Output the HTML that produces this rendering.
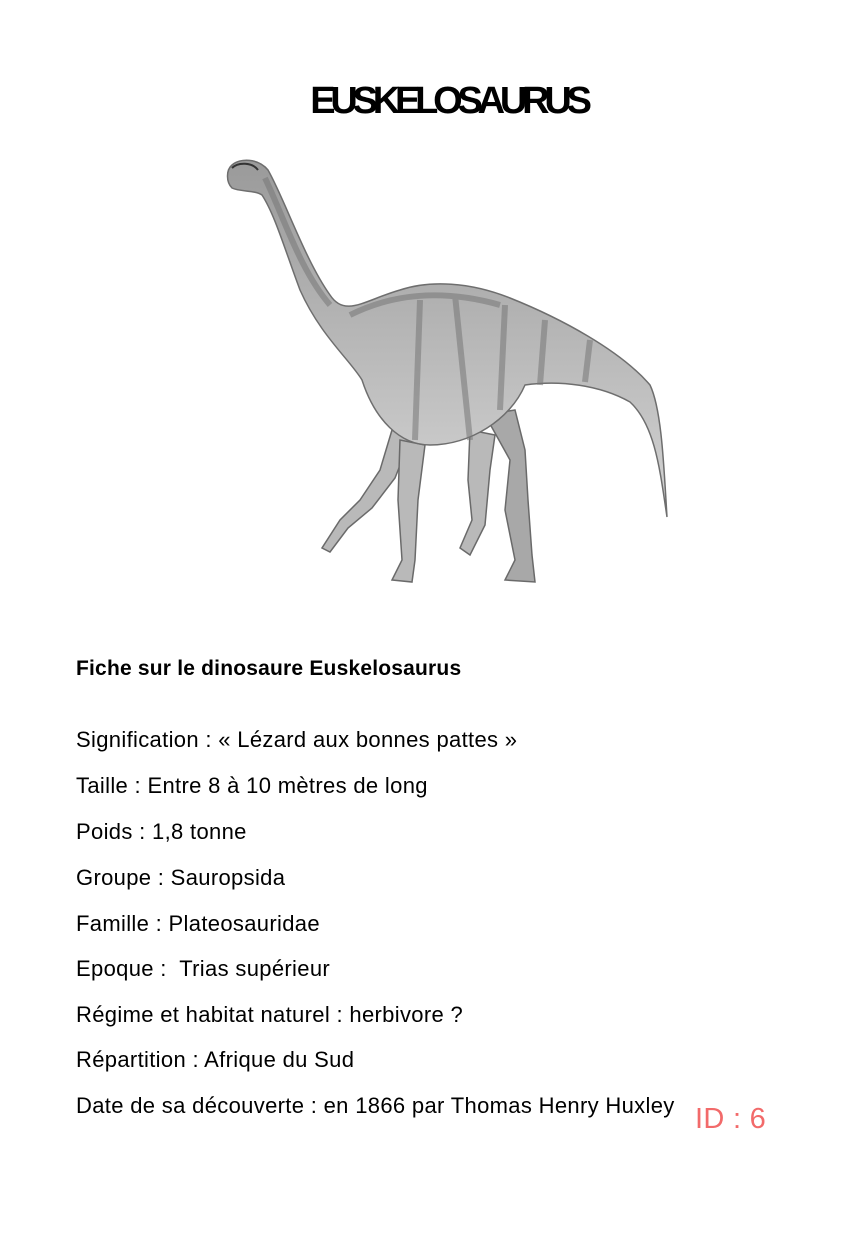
<!DOCTYPE html>
<html><head><meta charset="utf-8"><style>
html,body{margin:0;padding:0;background:#fff;}
body{width:855px;height:1235px;position:relative;overflow:hidden;font-family:"Liberation Sans","DejaVu Sans",sans-serif;color:#000;}
.t{position:absolute;white-space:nowrap;}
h1{position:absolute;left:0;width:897px;text-align:center;top:80px;margin:0;font-size:38px;font-weight:bold;letter-spacing:-5.2px;}
.sub{left:76px;top:657px;font-size:21px;font-weight:bold;letter-spacing:0.2px;}
.l{left:76px;font-size:22px;letter-spacing:0.33px;}
.id{left:695px;top:1103px;font-size:29px;color:#f26a6a;letter-spacing:0.3px;}
svg{position:absolute;left:0;top:0;}
</style></head><body>
<h1>EUSKELOSAURUS</h1>
<svg width="855" height="620" viewBox="0 0 855 620">
<defs><linearGradient id="g" x1="0" y1="0" x2="0" y2="1"><stop offset="0" stop-color="#9a9a9a"/><stop offset="1" stop-color="#d4d4d4"/></linearGradient></defs>
<g stroke="#6a6a6a" stroke-width="1.5" fill="#b9b9b9">
<path d="M392 430 L380 470 L360 500 L340 520 L322 548 L330 552 L348 528 L372 508 L395 478 L410 440 Z"/>
<path d="M400 440 L398 500 L402 560 L392 580 L412 582 L415 560 L418 500 L425 445 Z"/>
<path d="M470 430 L468 480 L472 520 L460 548 L470 555 L485 525 L490 470 L495 435 Z"/>
<path d="M485 415 L510 460 L505 510 L515 560 L505 580 L535 582 L532 555 L528 500 L525 450 L515 410 Z" fill="#a8a8a8"/>
</g>
<path d="M232 165 C240 158 258 158 268 170 C285 200 305 260 330 295 C345 318 365 300 400 290 C430 280 470 282 510 298 C560 318 620 350 650 385 C662 410 664 470 667 517 C660 470 655 425 630 402 C600 385 560 380 525 385 C510 420 470 445 430 445 C400 445 375 420 362 380 C350 360 320 335 300 290 C285 250 275 215 262 195 C255 190 240 192 232 188 C226 182 226 170 232 165 Z" fill="url(#g)" stroke="#6e6e6e" stroke-width="1.5"/>
<g stroke="#777" stroke-width="6" fill="none" opacity="0.55">
<path d="M350 315 C390 295 440 288 500 305"/>
<path d="M420 300 L415 440"/><path d="M455 295 L470 440"/><path d="M505 305 L500 410"/>
<path d="M545 320 L540 385"/><path d="M590 340 L585 382"/><path d="M265 178 C285 220 300 270 330 305"/>
</g>
<path d="M232 168 C238 162 252 162 258 170" stroke="#333" stroke-width="2" fill="none"/>
</svg>
<div class="t sub">Fiche sur le dinosaure Euskelosaurus</div>
<div class="t l" style="top:727px">Signification : « Lézard aux bonnes pattes »</div>
<div class="t l" style="top:773px">Taille : Entre 8 à 10 mètres de long</div>
<div class="t l" style="top:819px">Poids : 1,8 tonne</div>
<div class="t l" style="top:865px">Groupe : Sauropsida</div>
<div class="t l" style="top:911px">Famille : Plateosauridae</div>
<div class="t l" style="top:956px">Epoque :&nbsp; Trias supérieur</div>
<div class="t l" style="top:1002px">Régime et habitat naturel : herbivore ?</div>
<div class="t l" style="top:1047px">Répartition : Afrique du Sud</div>
<div class="t l" style="top:1093px">Date de sa découverte : en 1866 par Thomas Henry Huxley</div>
<div class="t id">ID : 6</div>
</body></html>
